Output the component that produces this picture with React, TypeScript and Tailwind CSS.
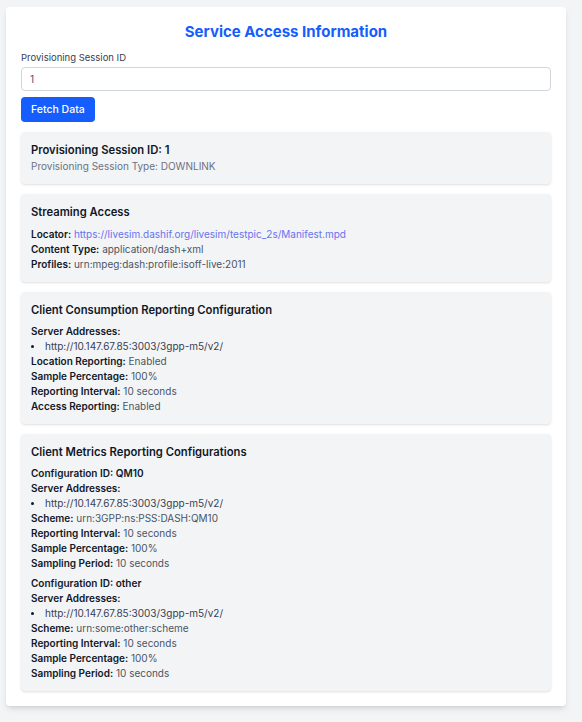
import React from 'react';

const servers = ['http://10.147.67.85:3003/3gpp-m5/v2/'];

const Field: React.FC<{ label: string; children: React.ReactNode }> = ({ label, children }) => (
  <div className="h-[15px] leading-[15px]">
    <span className="font-semibold text-gray-900">{label}:</span>{' '}
    <span className="text-gray-600">{children}</span>
  </div>
);

const ServerList: React.FC = () => (
  <>
    <div className="h-[15px] leading-[15px] font-semibold text-gray-900">Server Addresses:</div>
    {servers.map((s) => (
      <div key={s} className="flex items-center h-[15px] leading-[15px]">
        <span className="w-[3px] h-[3px] rounded-full bg-gray-900 mr-[11px]" />
        <span className="text-gray-700">{s}</span>
      </div>
    ))}
  </>
);

const Section: React.FC<{ title: string; children: React.ReactNode; gap?: string }> = ({ title, children, gap = 'mt-[5px]' }) => (
  <div className="bg-gray-100 rounded shadow-sm p-[10px]">
    <h3 className="text-[11.25px] leading-[17px] font-semibold text-gray-900">{title}</h3>
    <div className={gap}>{children}</div>
  </div>
);

const metrics = [
  { id: 'QM10', scheme: 'urn:3GPP:ns:PSS:DASH:QM10' },
  { id: 'other', scheme: 'urn:some:other:scheme' },
];

export default function App() {
  return (
    <div className="min-h-[722px] bg-gray-100 pt-[7px] pl-[6px]" style={{ fontFamily: 'Inter, "Noto Sans", sans-serif' }}>
      <div className="w-[560px] bg-white rounded shadow-md px-[15px] pt-[15px] pb-[15px]">
        <h1 className="text-center text-[15px] leading-[20px] font-bold text-blue-600">Service Access Information</h1>

        <label className="block mt-[9px] text-[9.5px] leading-[13px] text-gray-700">Provisioning Session ID</label>
        <input
          readOnly
          value="1"
          className="mt-[3px] block w-full h-[24px] rounded border border-gray-300 px-[8px] text-[10px] text-slate-600 outline-none"
        />
        <button className="mt-[6px] h-[25px] px-[10px] rounded bg-blue-600 text-white text-[10.5px] font-medium">Fetch Data</button>

        <div className="mt-[10px] flex flex-col gap-[10px] text-[10px]">
          <Section title="Provisioning Session ID: 1" gap="">
            <div className="h-[15px] leading-[15px] text-gray-500">Provisioning Session Type: DOWNLINK</div>
          </Section>

          <Section title="Streaming Access" gap="mt-[6px]">
            <div className="h-[15px] leading-[15px]">
              <span className="font-semibold text-gray-900">Locator:</span>{' '}
              <a className="text-[#6673f0]">https://livesim.dashif.org/livesim/testpic_2s/Manifest.mpd</a>
            </div>
            <Field label="Content Type">application/dash+xml</Field>
            <Field label="Profiles">urn:mpeg:dash:profile:isoff-live:2011</Field>
          </Section>

          <Section title="Client Consumption Reporting Configuration">
            <ServerList />
            <Field label="Location Reporting">Enabled</Field>
            <Field label="Sample Percentage">100%</Field>
            <Field label="Reporting Interval">10 seconds</Field>
            <Field label="Access Reporting">Enabled</Field>
          </Section>

          <Section title="Client Metrics Reporting Configurations">
            <div className="flex flex-col gap-[5px]">
              {metrics.map((m) => (
                <div key={m.id}>
                  <div className="h-[15px] leading-[15px] font-semibold text-gray-900">Configuration ID: {m.id}</div>
                  <ServerList />
                  <Field label="Scheme">{m.scheme}</Field>
                  <Field label="Reporting Interval">10 seconds</Field>
                  <Field label="Sample Percentage">100%</Field>
                  <Field label="Sampling Period">10 seconds</Field>
                </div>
              ))}
            </div>
          </Section>
        </div>
      </div>
    </div>
  );
}
